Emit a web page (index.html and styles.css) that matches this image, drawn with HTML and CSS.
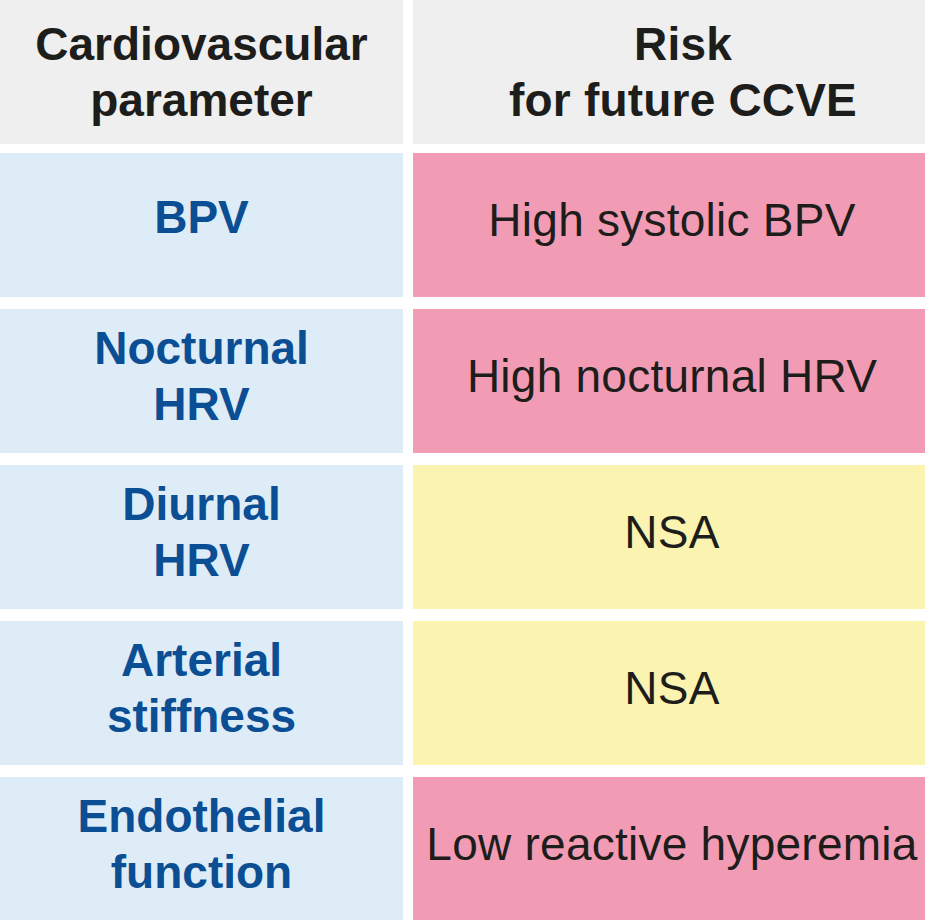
FILE: index.html
```html
<!DOCTYPE html>
<html lang="en">
<head>
<meta charset="utf-8">
<title>Cardiovascular parameters and CCVE risk</title>
<link rel="stylesheet" href="styles.css">
</head>
<body>
<div class="table">
  <div class="row header">
    <div class="cell head">Cardiovascular<br>parameter</div>
    <div class="cell head head-right">Risk<br>for future CCVE</div>
  </div>
  <div class="row">
    <div class="cell param single">BPV</div>
    <div class="cell risk pink">High systolic BPV</div>
  </div>
  <div class="row">
    <div class="cell param">Nocturnal<br>HRV</div>
    <div class="cell risk pink">High nocturnal HRV</div>
  </div>
  <div class="row">
    <div class="cell param">Diurnal<br>HRV</div>
    <div class="cell risk yellow">NSA</div>
  </div>
  <div class="row">
    <div class="cell param">Arterial<br>stiffness</div>
    <div class="cell risk yellow">NSA</div>
  </div>
  <div class="row">
    <div class="cell param">Endothelial<br>function</div>
    <div class="cell risk pink">Low reactive hyperemia</div>
  </div>
</div>
</body>
</html>
```

FILE: styles.css
```css
html, body {
  margin: 0;
  padding: 0;
  background: #ffffff;
}

body {
  width: 925px;
  height: 920px;
  overflow: hidden;
  font-family: "Liberation Sans", Arial, sans-serif;
}

.table {
  display: flex;
  flex-direction: column;
  gap: 12px;
}

.row {
  display: grid;
  grid-template-columns: 403px 512px;
  column-gap: 10px;
  height: 144px;
}

.row.header {
  margin-bottom: -3px;
}

.cell {
  display: flex;
  align-items: center;
  justify-content: center;
  text-align: center;
  font-size: 46px;
  line-height: 56px;
  padding-bottom: 10px;
  box-sizing: border-box;
}

.head {
  background: #efefef;
  color: #1d1d1b;
  font-weight: bold;
  padding-bottom: 0;
}

.head-right {
  padding-left: 28px;
  letter-spacing: 0.2px;
}

.param {
  background: #ddecf7;
  color: #0b4e94;
  font-weight: bold;
}

.param.single {
  padding-bottom: 16px;
}

.risk {
  color: #1d1d1b;
  font-weight: normal;
  padding-left: 6px;
  letter-spacing: 0.25px;
}

.pink {
  background: #f29bb4;
}

.yellow {
  background: #fbf3b0;
}
```
